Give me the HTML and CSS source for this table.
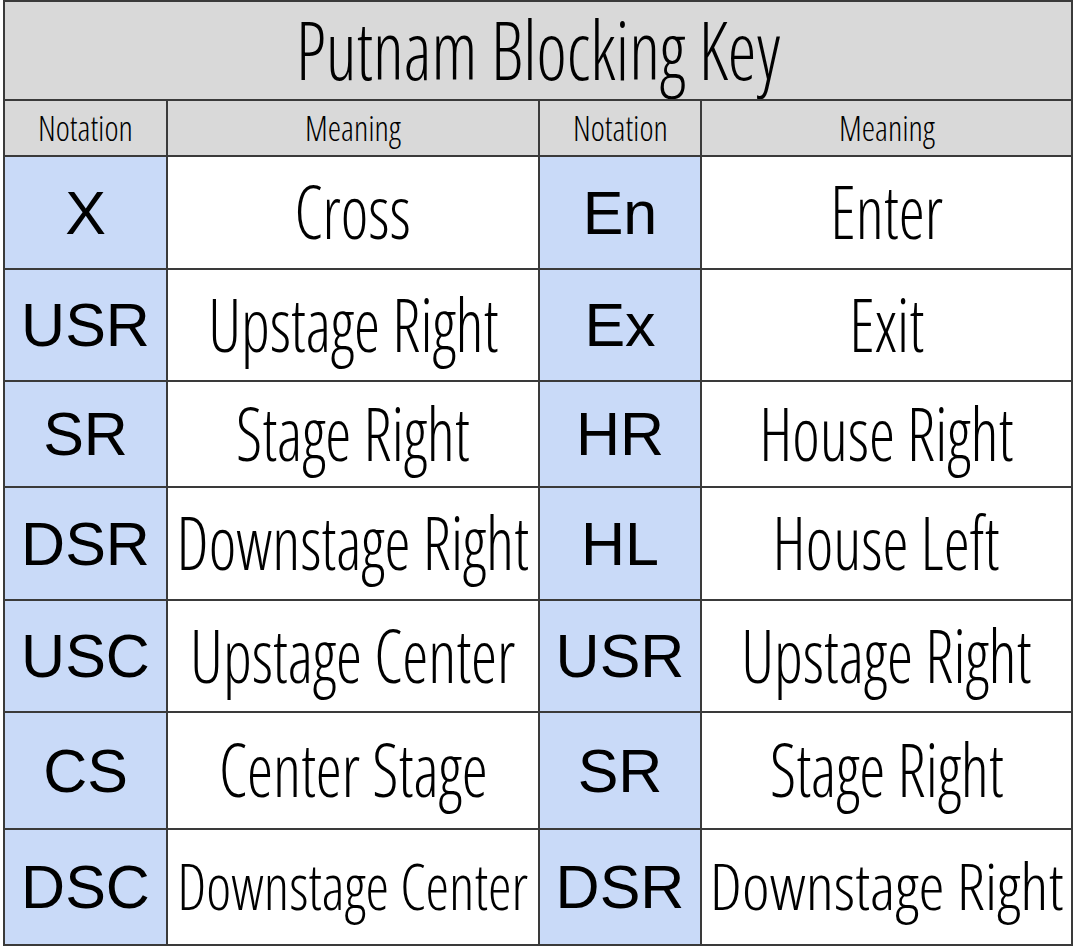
FILE: index.html
```html
<!DOCTYPE html>
<html>
<head>
<meta charset="utf-8">
<link rel="stylesheet" href="styles.css">
</head>
<body>
<div class="wrap">
<table class="key">
  <colgroup>
    <col class="c1"><col class="c2"><col class="c3"><col class="c4">
  </colgroup>
  <tr class="r-title"><th colspan="4" class="title"><span class="cond">Putnam Blocking Key</span></th></tr>
  <tr class="r-head">
    <th class="head"><span class="cond">Notation</span></th>
    <th class="head"><span class="cond">Meaning</span></th>
    <th class="head"><span class="cond">Notation</span></th>
    <th class="head"><span class="cond">Meaning</span></th>
  </tr>
  <tr class="r1"><td class="nt">X</td><td class="mn"><span class="cond">Cross</span></td><td class="nt">En</td><td class="mn"><span class="cond">Enter</span></td></tr>
  <tr class="r2"><td class="nt">USR</td><td class="mn"><span class="cond">Upstage Right</span></td><td class="nt">Ex</td><td class="mn"><span class="cond">Exit</span></td></tr>
  <tr class="r3"><td class="nt">SR</td><td class="mn"><span class="cond">Stage Right</span></td><td class="nt">HR</td><td class="mn"><span class="cond">House Right</span></td></tr>
  <tr class="r4"><td class="nt">DSR</td><td class="mn"><span class="cond">Downstage Right</span></td><td class="nt">HL</td><td class="mn"><span class="cond">House Left</span></td></tr>
  <tr class="r5"><td class="nt">USC</td><td class="mn"><span class="cond">Upstage Center</span></td><td class="nt">USR</td><td class="mn"><span class="cond">Upstage Right</span></td></tr>
  <tr class="r6"><td class="nt">CS</td><td class="mn"><span class="cond">Center Stage</span></td><td class="nt">SR</td><td class="mn"><span class="cond">Stage Right</span></td></tr>
  <tr class="r7"><td class="nt">DSC</td><td class="mn fit"><span class="cond dsc">Downstage Center</span></td><td class="nt">DSR</td><td class="mn fit"><span class="cond dsr">Downstage Right</span></td></tr>
</table>
</div>
</body>
</html>
```
FILE: styles.css
```css
html, body {
  margin: 0;
  padding: 0;
  background: #ffffff;
}
.wrap {
  padding: 0 0 0 3px;
}
.key {
  border-collapse: collapse;
  table-layout: fixed;
  width: 1070px;
}
.c1 { width: 163px; }
.c2 { width: 372px; }
.c3 { width: 162px; }
.c4 { width: 371px; }
.key th, .key td {
  border: 2px solid #3a3a3a;
  padding: 0;
  text-align: center;
  vertical-align: middle;
  color: #000;
  overflow: hidden;
  white-space: nowrap;
}
.cond {
  font-family: "Open Sans", "DejaVu Sans", sans-serif;
  font-stretch: 75%;
  font-weight: 300;
  display: inline-block;
  margin: 0 -60px;
  transform-origin: center center;
}
.title {
  background: #d9d9d9;
  font-size: 82px;
  font-weight: 400;
  line-height: 1;
}
.title .cond { transform: scaleX(0.88); }
.head {
  background: #d9d9d9;
  font-size: 35px;
  font-weight: 400;
  line-height: 1;
}
.head .cond { transform: scaleX(0.96); margin: 0 -10px; }
.nt {
  background: #c9daf8;
  font-family: "Liberation Sans", Arial, sans-serif;
  font-size: 61px;
}
.mn {
  background: #ffffff;
  font-size: 73px;
  line-height: 1;
}
.mn .cond { transform: scaleX(0.9); }
.mn.fit { font-size: 64px; }
.mn .cond.dsc { transform: scaleX(0.93); }
.mn .cond.dsr { transform: scaleX(1.03); }
.r-title { height: 99px; }
.r-head { height: 56px; }
.r1 { height: 113px; }
.r2 { height: 112px; }
.r3 { height: 106px; }
.r4 { height: 113px; }
.r5 { height: 112px; }
.r6 { height: 117px; }
.r7 { height: 116px; }
```
